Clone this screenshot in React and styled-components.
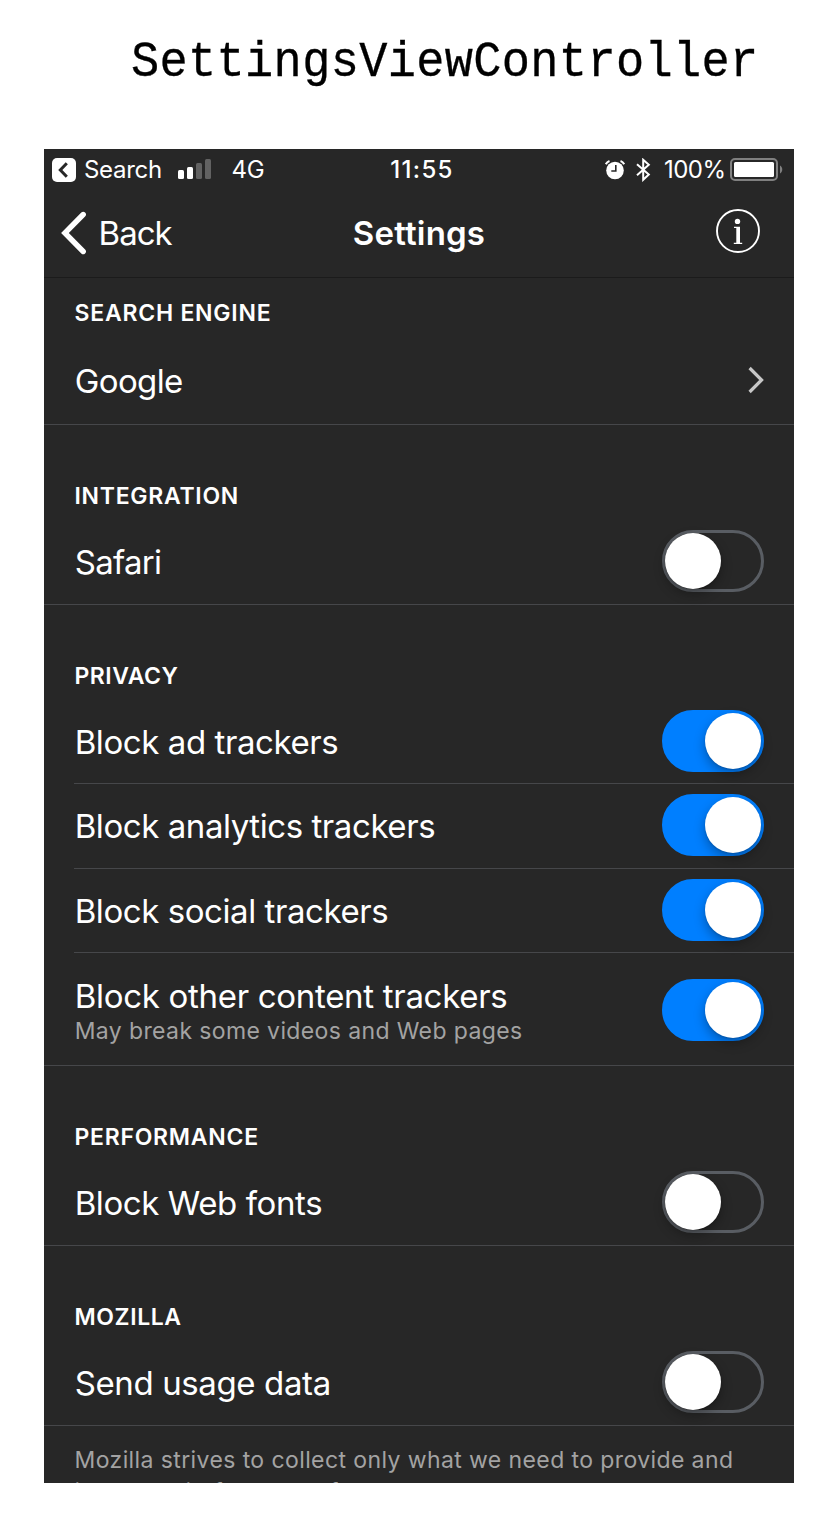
import React, { useState } from "react";
import styled, { createGlobalStyle } from "styled-components";

const GlobalStyle = createGlobalStyle`
  * { box-sizing: border-box; }
  body { margin: 0; background: #fff; overflow: hidden; }
  svg { display: block; flex: none; }
`;

const Page = styled.main`
  width: 827px;
  height: 1519px;
  padding-left: 44px;
  background: #fff;
`;

const Caption = styled.h1`
  height: 149px;
  margin: 0;
  padding: 36px 0 0 87px;
  font: 400 47px/56px "Liberation Mono", monospace;
  letter-spacing: 0.32px;
  color: #000;
  -webkit-text-stroke: 0.3px #000;
`;

const CaptionText = styled.span`
  display: inline-block;
  transform: scaleY(1.08);
  transform-origin: 0 42px;
`;

const Phone = styled.section`
  width: 750px;
  height: 1334px;
  overflow: hidden;
  background: #272727;
  color: #fff;
  font-family: Inter, "Liberation Sans", sans-serif;
`;

const StatusBar = styled.div`
  display: grid;
  grid-template-columns: 1fr auto 1fr;
  align-items: center;
  height: 41px;
  padding: 0 11px 0 8px;
  font-size: 24px;
  line-height: 30px;
`;

const StatusGroup = styled.div`
  display: flex;
  align-items: center;
  justify-content: ${(p) => (p.$end ? "flex-end" : "flex-start")};
`;

const StatusText = styled.span`
  margin-left: ${(p) => p.$gap || 0}px;
  letter-spacing: ${(p) => p.$track}px;
  font-weight: ${(p) => p.$weight || 400};
`;

const Signal = styled.div`
  display: flex;
  align-items: flex-end;
  gap: 3px;
  height: 20px;
  margin: 0 0 2px 16px;
`;

const Bar = styled.i`
  width: 6px;
  height: ${(p) => p.$h}px;
  border-radius: 1.5px;
  background: ${(p) => (p.$on ? "#fff" : "#626262")};
`;

const NavBar = styled.header`
  display: grid;
  grid-template-columns: 1fr auto 1fr;
  align-items: center;
  height: 88px;
  padding: 0 34px 5px 17px;
  border-bottom: 1px solid #1b1b1b;
  font-size: 33px;
  line-height: 40px;
`;

const BackLink = styled.div`
  display: flex;
  align-items: center;
  gap: 11.5px;
  padding-top: 4px;
  letter-spacing: -0.95px;
`;

const NavTitle = styled.h2`
  margin: 3px 0 0 17px;
  font-size: 33px;
  font-weight: 600;
  letter-spacing: 0.18px;
`;

const InfoSlot = styled.div`
  display: flex;
  justify-content: flex-end;
`;

const GroupTitle = styled.h3`
  display: flex;
  align-items: flex-end;
  height: ${(p) => (p.$first ? 62 : 94)}px;
  margin: 0;
  padding: 0 0 ${(p) => (p.$first ? 13 : 9)}px 30.5px;
  font-size: 23px;
  line-height: 28px;
  font-weight: 600;
  letter-spacing: ${(p) => p.$track}px;
`;

const Row = styled.div`
  display: flex;
  align-items: center;
  justify-content: space-between;
  height: ${(p) => p.$height}px;
  margin-left: ${(p) => (p.$inset ? 30 : 0)}px;
  padding: ${(p) => p.$drop || 0}px 30px ${(p) => p.$lift || 0}px ${(p) => (p.$inset ? 0.7 : 30.7)}px;
  border-bottom: 1px solid #46474a;
`;

const Texts = styled.div`
  padding-top: 2px;
`;

const Label = styled.div`
  font-size: 33px;
  line-height: 40px;
  letter-spacing: ${(p) => p.$track}px;
`;

const Detail = styled.div`
  margin-top: -1px;
  font-size: 23px;
  line-height: 32px;
  letter-spacing: 0.38px;
  color: #a3a3a3;
`;

const Footnote = styled.p`
  width: 720px;
  margin: 0;
  padding: 18px 0 0 30.5px;
  font-size: 23px;
  line-height: 32px;
  letter-spacing: 0.4px;
  color: #a3a3a3;
`;

const Track = styled.button`
  display: flex;
  flex: none;
  justify-content: ${(p) => (p.$on ? "flex-end" : "flex-start")};
  align-items: center;
  width: 102px;
  height: 62px;
  padding: 0;
  border: 3px solid ${(p) => (p.$on ? "#007fff" : "#595d63")};
  border-radius: 31px;
  background: ${(p) => (p.$on ? "#007fff" : "transparent")};
`;

const Knob = styled.span`
  width: 56px;
  height: 56px;
  border-radius: 50%;
  background: #fff;
  box-shadow: 0 5px 12px rgba(0, 0, 0, 0.3), 0 1px 2px rgba(0, 0, 0, 0.15);
`;

function Toggle({ initial, label }) {
  const [on, setOn] = useState(initial);
  return (
    <Track $on={on} role="switch" aria-checked={on} aria-label={label} onClick={() => setOn(!on)}>
      <Knob />
    </Track>
  );
}

const ReturnIcon = () => (
  <svg width="24" height="24" viewBox="0 0 24 24">
    <rect width="24" height="24" rx="5" fill="#fff" />
    <path d="M14.800 5.300 8.300 12l6.500 6.700" fill="none" stroke="#272727" strokeWidth="3" />
  </svg>
);

const AlarmIcon = () => (
  <svg width="20" height="20" viewBox="0 0 20 20">
    <circle cx="10" cy="10.500" r="8.800" fill="#fff" />
    <path d="M.8 4.200A7 7 0 0 1 4.500 1M19.200 4.200A7 7 0 0 0 15.500 1" fill="none" stroke="#fff" strokeWidth="2" />
    <path d="M10.800 5v6H6.300" fill="none" stroke="#272727" strokeWidth="1.600" />
  </svg>
);

const BluetoothIcon = () => (
  <svg width="15" height="24" viewBox="0 0 15 24">
    <path d="M1 6.300 12.800 16.600 7.200 21.800V1.800l5.600 5L1 17.200" fill="none" stroke="#fff" strokeWidth="2" />
  </svg>
);

const BatteryIcon = () => (
  <svg width="53" height="24" viewBox="0 0 53 24">
    <rect x="1" y="1" width="46" height="21" rx="4" fill="none" stroke="#808080" strokeWidth="2" />
    <rect x="4" y="4" width="40" height="15" rx="1.500" fill="#fff" />
    <path d="M50 7.500c3 1.500 3 6.500 0 8z" fill="#808080" />
  </svg>
);

const BackIcon = () => (
  <svg width="26" height="44" viewBox="0 0 26 44">
    <path d="M22.200 3.500 3.900 22l18.300 18.500" fill="none" stroke="#fff" strokeWidth="5.400" strokeLinecap="round" />
  </svg>
);

const InfoIcon = () => (
  <svg width="44" height="44" viewBox="0 0 44 44">
    <circle cx="22" cy="22" r="21" fill="none" stroke="#fff" strokeWidth="1.900" />
    <circle cx="21.500" cy="12.400" r="2.700" fill="#fff" />
    <path d="M18 17.700h6V33.800h2.200V35H17.800v-1.200H20.300V19H18z" fill="#fff" />
  </svg>
);

const DisclosureIcon = () => (
  <svg width="16" height="28" viewBox="0 0 16 28">
    <path d="m1.600 2 12 12-12 12" fill="none" stroke="#c7c7c7" strokeWidth="3.200" />
  </svg>
);

const groups = [
  {
    title: "SEARCH ENGINE", track: 0.77, first: true,
    rows: [{ label: "Google", track: -0.6, link: true, height: 85, lift: 4 }],
  },
  { title: "INTEGRATION", track: 0.72, rows: [{ label: "Safari", track: -0.7, height: 86, lift: 1 }] },
  {
    title: "PRIVACY", track: 0.5,
    rows: [
      { label: "Block ad trackers", track: -0.42, on: true, inset: true },
      { label: "Block analytics trackers", track: -0.43, on: true, inset: true, lift: 2 },
      { label: "Block social trackers", track: -0.43, on: true, inset: true, height: 84, lift: 1 },
      {
        label: "Block other content trackers", track: -0.3, on: true, height: 113, drop: 2,
        detail: "May break some videos and Web pages",
      },
    ],
  },
  { title: "PERFORMANCE", track: 0.73, rows: [{ label: "Block Web fonts", track: -0.41, height: 86, lift: 1 }] },
  { title: "MOZILLA", track: 0.6, rows: [{ label: "Send usage data", track: -0.38, height: 86, lift: 1 }] },
];

export default function App() {
  return (
    <Page>
      <GlobalStyle />
      <Caption><CaptionText>SettingsViewController</CaptionText></Caption>
      <Phone>
        <StatusBar>
          <StatusGroup>
            <ReturnIcon />
            <StatusText $gap={8} $track={-0.29}>Search</StatusText>
            <Signal>
              <Bar $on $h={9} />
              <Bar $on $h={12} />
              <Bar $h={16} />
              <Bar $h={20} />
            </Signal>
            <StatusText $gap={20.5} $track={-0.2}>4G</StatusText>
          </StatusGroup>
          <StatusText $gap={9} $weight={550} $track={1.3}>11:55</StatusText>
          <StatusGroup $end>
            <AlarmIcon />
            <StatusText $gap={11} $track={0}><BluetoothIcon /></StatusText>
            <StatusText $gap={13} $track={-0.5}>100%</StatusText>
            <StatusText $gap={4.5} $track={0}><BatteryIcon /></StatusText>
          </StatusGroup>
        </StatusBar>
        <NavBar>
          <BackLink><BackIcon />Back</BackLink>
          <NavTitle>Settings</NavTitle>
          <InfoSlot><InfoIcon /></InfoSlot>
        </NavBar>
        {groups.map((group) => (
          <React.Fragment key={group.title}>
            <GroupTitle $first={group.first} $track={group.track}>{group.title}</GroupTitle>
            {group.rows.map((row) => (
              <Row key={row.label} $height={row.height || 85} $inset={row.inset} $lift={row.lift} $drop={row.drop}>
                <Texts>
                  <Label $track={row.track}>{row.label}</Label>
                  {row.detail && <Detail>{row.detail}</Detail>}
                </Texts>
                {row.link ? <DisclosureIcon /> : <Toggle initial={!!row.on} label={row.label} />}
              </Row>
            ))}
          </React.Fragment>
        ))}
        <Footnote>
          Mozilla strives to collect only what we need to provide and improve Firefox Focus for everyone.
        </Footnote>
      </Phone>
    </Page>
  );
}
